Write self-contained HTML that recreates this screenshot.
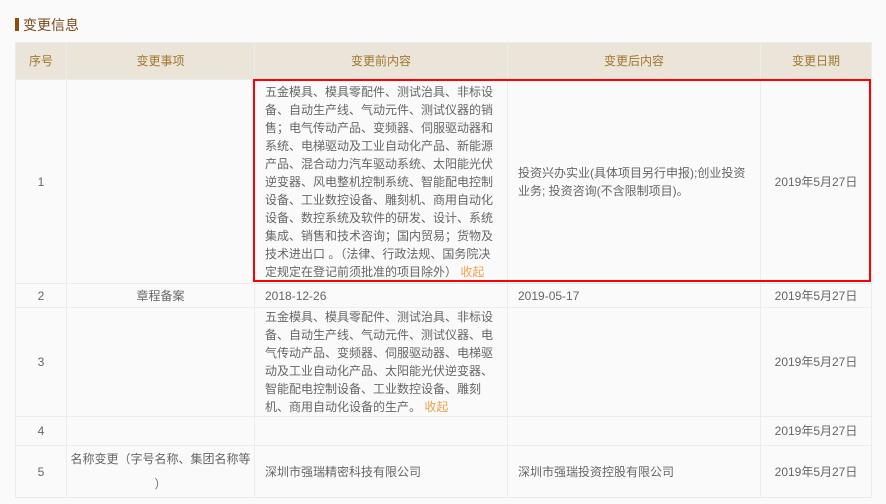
<!DOCTYPE html>
<html><head><meta charset="utf-8"><style>
body{margin:0;background:#fafafa;font-family:"Liberation Sans","Noto Sans CJK SC",sans-serif;font-size:12px;color:#666;width:886px;height:504px;overflow:hidden;position:relative}
.title{position:absolute;left:15px;top:16px;font-size:14px;color:#7a4a1a;line-height:18px}
.title:before{content:"";display:inline-block;width:4px;height:13px;background:#8a4f10;margin-right:4px;vertical-align:-1px}
table{position:absolute;left:15px;top:42px;border-collapse:collapse;table-layout:fixed;width:856px}
td,th{border:1px solid #ececec;padding:0 10px;line-height:18px;white-space:nowrap}
th{background:#ebe4d8;color:#a0782f;font-weight:normal;height:36px;font-size:12px}
.c{text-align:center}
.o{color:#f0a050}
.red{position:absolute;left:253px;top:79px;width:614px;height:199px;border:2px solid #f00}
</style></head><body>
<div class="title">变更信息</div>
<table>
<colgroup><col style="width:51px"><col style="width:188px"><col style="width:253px"><col style="width:253px"><col style="width:111px"></colgroup>
<tr><th>序号</th><th>变更事项</th><th>变更前内容</th><th>变更后内容</th><th>变更日期</th></tr>
<tr style="height:204px"><td class="c">1</td><td></td><td>五金模具、模具零配件、测试治具、非标设<br>备、自动生产线、气动元件、测试仪器的销<br>售；电气传动产品、变频器、伺服驱动器和<br>系统、电梯驱动及工业自动化产品、新能源<br>产品、混合动力汽车驱动系统、太阳能光伏<br>逆变器、风电整机控制系统、智能配电控制<br>设备、工业数控设备、雕刻机、商用自动化<br>设备、数控系统及软件的研发、设计、系统<br>集成、销售和技术咨询；国内贸易；货物及<br>技术进出口 。（法律、行政法规、国务院决<br>定规定在登记前须批准的项目除外） <span class="o">收起</span></td><td>投资兴办实业(具体项目另行申报);创业投资<br>业务; 投资咨询(不含限制项目)。</td><td class="c">2019年5月27日</td></tr>
<tr style="height:24px"><td class="c">2</td><td class="c">章程备案</td><td>2018-12-26</td><td>2019-05-17</td><td class="c">2019年5月27日</td></tr>
<tr style="height:109px"><td class="c">3</td><td></td><td>五金模具、模具零配件、测试治具、非标设<br>备、自动生产线、气动元件、测试仪器、电<br>气传动产品、变频器、伺服驱动器、电梯驱<br>动及工业自动化产品、太阳能光伏逆变器、<br>智能配电控制设备、工业数控设备、雕刻<br>机、商用自动化设备的生产。 <span class="o">收起</span></td><td></td><td class="c">2019年5月27日</td></tr>
<tr style="height:29px"><td class="c">4</td><td></td><td></td><td></td><td class="c">2019年5月27日</td></tr>
<tr style="height:52px"><td class="c">5</td><td class="c" style="padding:0 2px;line-height:25px">名称变更（字号名称、集团名称等<br>）</td><td>深圳市强瑞精密科技有限公司</td><td>深圳市强瑞投资控股有限公司</td><td class="c">2019年5月27日</td></tr>
</table>
<div class="red"></div>
</body></html>
